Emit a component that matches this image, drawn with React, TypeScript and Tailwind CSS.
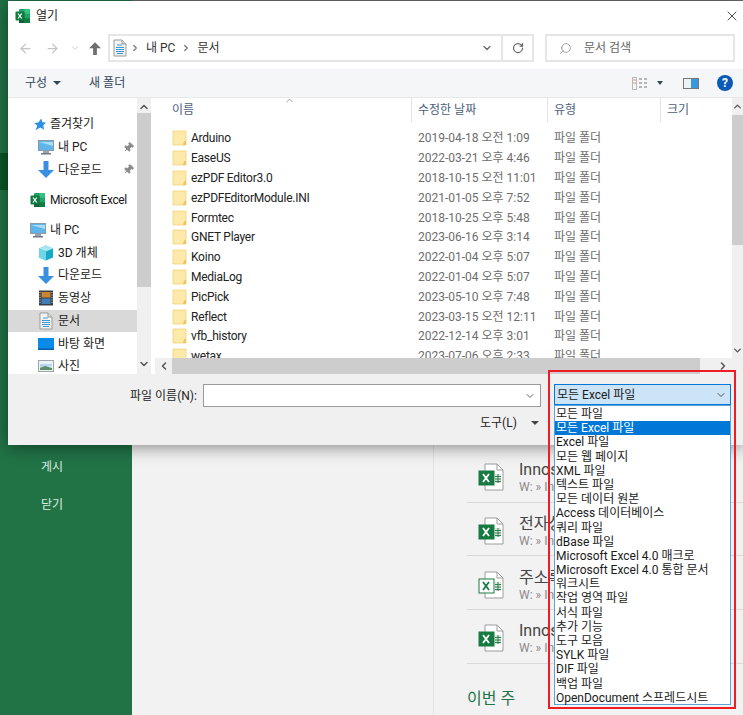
import { ArrowLeft, ArrowRight, ChevronDown, ChevronLeft, ChevronRight, ChevronUp, Pin, RotateCw, Search, X } from "lucide-react"

const font = "font-['Roboto','Noto_Sans_CJK_KR',sans-serif]"

const folders = [
  ["Arduino", "2019-04-18 오전 1:09"],
  ["EaseUS", "2022-03-21 오후 4:46"],
  ["ezPDF Editor3.0", "2018-10-15 오전 11:01"],
  ["ezPDFEditorModule.INI", "2021-01-05 오후 7:52"],
  ["Formtec", "2018-10-25 오후 5:48"],
  ["GNET Player", "2023-06-16 오후 3:14"],
  ["Koino", "2022-01-04 오후 5:07"],
  ["MediaLog", "2022-01-04 오후 5:07"],
  ["PicPick", "2023-05-10 오후 7:48"],
  ["Reflect", "2023-03-15 오전 12:11"],
  ["vfb_history", "2022-12-14 오후 3:01"],
  ["wetax", "2023-07-06 오후 2:33"],
]

const filters = [
  "모든 파일",
  "모든 Excel 파일",
  "Excel 파일",
  "모든 웹 페이지",
  "XML 파일",
  "텍스트 파일",
  "모든 데이터 원본",
  "Access 데이터베이스",
  "쿼리 파일",
  "dBase 파일",
  "Microsoft Excel 4.0 매크로",
  "Microsoft Excel 4.0 통합 문서",
  "워크시트",
  "작업 영역 파일",
  "서식 파일",
  "추가 기능",
  "도구 모음",
  "SYLK 파일",
  "DIF 파일",
  "백업 파일",
  "OpenDocument 스프레드시트",
]

const recent = [
  { title: "Innos", path: "W: » In", old: false },
  { title: "전자상", path: "W: » In", old: false },
  { title: "주소록", path: "W: » In", old: true },
  { title: "Innos", path: "W: » In", old: false },
]

function ExcelLogo({ size = 16 }: { size?: number }) {
  return (
    <svg width={size} height={size} viewBox="0 0 16 16" className="shrink-0">
      <rect x="4" y="1" width="11" height="14" rx="1" fill="#21a366" />
      <rect x="9.5" y="1" width="5.5" height="4.7" fill="#33c481" />
      <rect x="4" y="5.7" width="5.5" height="4.6" fill="#107c41" />
      <rect x="9.5" y="10.3" width="5.5" height="4.7" fill="#107c41" />
      <rect x="4" y="10.3" width="5.5" height="4.7" fill="#185c37" />
      <rect x="0.5" y="3.5" width="9" height="9" rx="1" fill="#0f7a3f" />
      <path d="M3 5.5l3.8 5M6.8 5.5L3 10.5" stroke="#fff" strokeWidth="1.2" />
    </svg>
  )
}

function FolderIcon() {
  return (
    <svg width="16" height="16" viewBox="0 0 16 16" className="shrink-0">
      <path d="M1 1h13v14H1z" fill="#fde9a9" stroke="#f3d27a" strokeWidth="0.8" />
      <path d="M12 11.5l2-1V15h-3z" fill="#eec560" />
    </svg>
  )
}

function DocIcon() {
  return (
    <svg width="16" height="18" viewBox="0 0 16 18" className="shrink-0">
      <path d="M2 1h8l4 4v12H2z" fill="#f4f4f4" stroke="#9a9a9a" />
      <path d="M10 1v4h4" fill="#dcdcdc" stroke="#9a9a9a" />
      <path d="M5 6h5M4 8.5h8M4 10.5h8M4 12.5h8M5 14.5h6" stroke="#3d9ad9" strokeWidth="1.2" />
    </svg>
  )
}

function PcIcon() {
  return (
    <svg width="16" height="15" viewBox="0 0 16 15" className="shrink-0">
      <rect x="0.5" y="0.5" width="15" height="10" fill="#5fb4ea" stroke="#8a9aa6" />
      <path d="M1 2l14 0v4z" fill="#a8dcf8" />
      <rect x="5" y="11" width="6" height="2" fill="#9aa5ad" />
      <rect x="3" y="13" width="10" height="1.5" fill="#6f7b84" />
    </svg>
  )
}

function BlockArrow({ up, color, w = 16, h = 17 }: { up?: boolean; color: string; w?: number; h?: number }) {
  return (
    <svg width={w} height={h} viewBox="0 0 16 17" className={`shrink-0 ${up ? "rotate-180" : ""}`}>
      <path d="M5.5 0h5v9H16l-8 8-8-8h5.5z" fill={color} />
    </svg>
  )
}

function SideIcon({ kind }: { kind: string }) {
  if (kind === "star")
    return (
      <svg width="13" height="13" viewBox="0 0 24 24" className="shrink-0">
        <path d="M15 1l2.5 7 6.5.5-5 5 1.5 8-7-4-9 5 3.5-8L2 9l8-.5z" fill="#2f8fe0" />
      </svg>
    )
  if (kind === "pc") return <PcIcon />
  if (kind === "down") return <BlockArrow color="#3a8fe0" />
  if (kind === "excel") return <ExcelLogo />
  if (kind === "cube")
    return (
      <svg width="16" height="16" viewBox="0 0 16 16" className="shrink-0">
        <path d="M8 0.5l7 3v9l-7 3-7-3v-9z" fill="#17a9c9" />
        <path d="M8 0.5l7 3-7 3-7-3z" fill="#a9e8f2" />
        <path d="M1 3.5l7 3v9l-7-3z" fill="#6fd6e6" />
      </svg>
    )
  if (kind === "film")
    return (
      <svg width="16" height="16" viewBox="0 0 16 16" className="shrink-0">
        <rect x="1" y="0.5" width="14" height="15" fill="#3a3f46" />
        <rect x="3.5" y="2" width="9" height="5.5" fill="#c9862f" />
        <rect x="3.5" y="8.5" width="9" height="5.5" fill="#3f7fb8" />
        <path d="M2 2v12M14 2v12" stroke="#d9d9d9" strokeDasharray="1 1.5" />
      </svg>
    )
  if (kind === "doc") return <DocIcon />
  if (kind === "desktop")
    return (
      <svg width="16" height="12" viewBox="0 0 16 12" className="shrink-0">
        <rect width="16" height="12" fill="#0a8be8" />
        <rect y="10.5" width="16" height="1.5" fill="#0a5fa8" />
      </svg>
    )
  return (
    <svg width="16" height="12" viewBox="0 0 16 12" className="shrink-0">
      <rect x="0.5" y="0.5" width="15" height="11" fill="#e8f2f8" stroke="#a3a3a3" />
      <path d="M2 4h12v2l-6 1-6 2z" fill="#b7d7ea" />
      <path d="M2 10V8l5-2 7 2v2z" fill="#5d8d68" />
    </svg>
  )
}

function SideRow({ kind, label, className, pinned, active }: { kind: string; label: string; className: string; pinned?: boolean; active?: boolean }) {
  return (
    <div className={`flex h-[22.7px] shrink-0 items-center gap-[4px] ${className} ${active ? "bg-[#d9d9d9]" : ""}`}>
      <SideIcon kind={kind} />
      <span className="whitespace-nowrap">{label}</span>
      {pinned && <Pin size={11} fill="#8a8a8a" className="ml-auto mr-[3px] rotate-45 text-[#8a8a8a]" />}
    </div>
  )
}

function FileXlsIcon({ old }: { old: boolean }) {
  return (
    <svg width="26" height="28" viewBox="0 0 26 28" className="shrink-0">
      <path d="M7 1h12l6 6v20H7z" fill="#fff" stroke="#9c9c9c" />
      <path d="M19 1v6h6" fill="none" stroke="#9c9c9c" />
      <path d="M17 11h6v9h-6z" fill="#d8e8dd" />
      <path d="M17 13.5h6M17 16h6M17 18.5h6M20 11v9" stroke="#217346" strokeWidth="0.9" />
      <rect x="1" y="8" width="15" height="14" fill={old ? "#fff" : "#187a43"} stroke="#187a43" />
      <path d="M5 11l6 8M11 11l-6 8" stroke={old ? "#187a43" : "#fff"} strokeWidth="1.8" />
    </svg>
  )
}

export default function App() {
  return (
    <div className={`relative flex h-[715px] w-[743px] overflow-hidden bg-[#f2f2f2] ${font}`}>
      {/* Excel backstage behind the dialog */}
      <div className="flex h-full w-[132px] shrink-0 flex-col bg-[#217346] pl-[41px] pt-[457px] text-[12px] text-[#dcebe2]">
        <div className="h-[38px] leading-[20px]">게시</div>
        <div className="leading-[20px]">닫기</div>
      </div>
      <div className="h-full w-[302px] shrink-0 border-r border-[#e2e2e2]" />
      <div className="flex-1 pl-[33px] pt-[449px]">
        {recent.map((r, i) => (
          <div key={i} className="flex h-[53.7px] items-center gap-[15px] border-b border-[#d9d9d9] pl-[11px] pt-[4px]">
            <FileXlsIcon old={r.old} />
            <div className="flex flex-col">
              <span className="whitespace-nowrap text-[16px] leading-[20px] text-[#444]">{r.title}</span>
              <span className="whitespace-nowrap text-[12px] leading-[14px] text-[#8a8a8a]">{r.path}</span>
            </div>
          </div>
        ))}
        <div className="pt-[25px] text-[16px] leading-[20px] text-[#217346]">이번 주</div>
      </div>

      {/* dark selected nav behind dialog */}
      <div className="absolute left-0 top-[153px] h-[37px] w-[8px] bg-[#0a5526]" />
      <div className="absolute left-[132px] right-0 top-0 h-px bg-[#6e6e6e]" />

      {/* Open dialog */}
      <div className="absolute left-[8px] top-[1px] flex h-[444px] w-[735px] flex-col bg-white text-[12px] text-[#1a1a1a] shadow-[0_2px_16px_rgba(0,0,0,0.45)]">
        <div className="flex h-[29px] shrink-0 items-center pl-[7px] pr-[2px]">
          <ExcelLogo />
          <span className="ml-[5px]">열기</span>
          <X size={16} strokeWidth={1.2} className="ml-auto mr-[1px]" />
        </div>

        <div className="flex h-[39px] shrink-0 items-start pt-[4px]">
          <div className="flex h-[28px] w-[100px] items-center text-[#c4c4c4]">
            <ArrowLeft size={15} className="ml-[10px]" />
            <ArrowRight size={15} className="ml-[12px]" />
            <ChevronDown size={10} className="ml-[10px]" />
            <div className="ml-[9px] flex"><BlockArrow up color="#6f6f6f" w={12} h={13} /></div>
          </div>
          <div className="flex h-[28px] w-[426px] items-center border-2 border-[#e6e6e6] text-[#333]">
            <div className="ml-[2px]"><DocIcon /></div>
            <ChevronRight size={10} strokeWidth={3} className="ml-[2px] text-[#777]" />
            <span className="ml-[6px]">내 PC</span>
            <ChevronRight size={10} strokeWidth={3} className="ml-[6px] text-[#777]" />
            <span className="ml-[6px]">문서</span>
            <ChevronDown size={12} strokeWidth={2.5} className="ml-auto mr-[8px] text-[#666]" />
            <div className="flex h-full w-[31px] items-center justify-center border-l-2 border-[#e6e6e6]">
              <RotateCw size={12} strokeWidth={2.5} className="text-[#666]" />
            </div>
          </div>
          <div className="ml-[11px] flex h-[28px] w-[190px] items-center border-2 border-[#e6e6e6] text-[#666]">
            <Search size={13} strokeWidth={1.2} className="ml-[12px] -scale-x-100 text-[#777]" />
            <span className="ml-[12px]">문서 검색</span>
          </div>
        </div>

        <div className="flex h-[29px] shrink-0 items-center border-b border-[#e8e8e8] bg-[#f5f6f7] text-[#33475b]">
          <span className="ml-[17px]">구성</span>
          <span className="ml-[6px] h-0 w-0 border-x-[4px] border-t-[4px] border-x-transparent border-t-[#33475b]" />
          <span className="ml-[28px]">새 폴더</span>
          <div className="ml-auto flex items-center">
            <svg width="16" height="13" viewBox="0 0 16 13">
              <rect x="0.5" y="0.5" width="4" height="12" fill="none" stroke="#b9b9b9" />
              <path d="M1 3h3M1 6h3" stroke="#d9534f" strokeWidth="0.6" />
              <path d="M7 2h3M12 2h3M7 6h3M12 6h3M7 10h3M12 10h3" stroke="#777" />
            </svg>
            <span className="ml-[9px] h-0 w-0 border-x-[3.5px] border-t-[4px] border-x-transparent border-t-[#33475b]" />
            <div className="ml-[20px] flex h-[11px] w-[16px] border border-[#777]">
              <div className="flex-1 bg-[#eef3f7]" />
              <div className="w-[7px] bg-[#3a96dd]" />
            </div>
            <div className="ml-[18px] mr-[10px] flex h-[16px] w-[16px] items-center justify-center rounded-full bg-[#0a5bb5] text-[12px] font-bold text-white">?</div>
          </div>
        </div>

        <div className="flex min-h-0 flex-1">
          {/* nav pane */}
          <div className="flex w-[143px] shrink-0 overflow-hidden">
            <div className="flex w-[129px] shrink-0 flex-col overflow-hidden pt-[15px]">
              <SideRow kind="star" label="즐겨찾기" className="pl-[25px]" />
              <SideRow kind="pc" label="내 PC" className="pl-[30px]" pinned />
              <SideRow kind="down" label="다운로드" className="pl-[30px]" pinned />
              <div className="h-[7.5px] shrink-0" />
              <SideRow kind="excel" label="Microsoft Excel" className="pl-[22px] tracking-[-0.4px]" />
              <div className="h-[7.5px] shrink-0" />
              <SideRow kind="pc" label="내 PC" className="pl-[22px]" />
              <SideRow kind="cube" label="3D 개체" className="pl-[30px]" />
              <SideRow kind="down" label="다운로드" className="pl-[30px]" />
              <SideRow kind="film" label="동영상" className="pl-[30px]" />
              <SideRow kind="doc" label="문서" className="pl-[30px]" active />
              <SideRow kind="desktop" label="바탕 화면" className="pl-[30px]" />
              <SideRow kind="photo" label="사진" className="pl-[30px]" />
            </div>
            <div className="flex w-[14px] shrink-0 flex-col bg-[#f0f0f0] text-[#555]">
              <ChevronUp size={12} strokeWidth={3} className="mx-auto mt-[3px] shrink-0" />
              <div className="h-[174px] shrink-0 bg-[#cdcdcd]" />
              <ChevronDown size={12} strokeWidth={3} className="mx-auto mb-[4px] mt-auto shrink-0" />
            </div>
          </div>

          {/* file list */}
          <div className="flex min-w-0 flex-1 flex-col pl-[4px]">
            <div className="relative flex min-h-0 flex-1">
              <div className="flex min-w-0 flex-1 flex-col overflow-hidden">
                <div className="flex h-[24px] shrink-0 text-[#4c607a]">
                  <div className="w-[257px] border-r border-[#e5e5e5] pl-[17px] leading-[25px]">이름</div>
                  <div className="w-[136px] border-r border-[#e5e5e5] pl-[6px] leading-[25px]">수정한 날짜</div>
                  <div className="w-[113px] border-r border-[#e5e5e5] pl-[6px] leading-[25px]">유형</div>
                  <div className="pl-[6px] leading-[25px]">크기</div>
                </div>
                <div className="flex flex-col pt-[6.5px]">
                  {folders.map(([name, date]) => (
                    <div key={name} className="flex h-[19.8px] shrink-0 items-center">
                      <div className="flex w-[257px] items-center gap-[3px] pl-[17px] text-[#222]">
                        <FolderIcon />
                        <span className="whitespace-nowrap tracking-[-0.25px]">{name}</span>
                      </div>
                      <div className="w-[136px] whitespace-nowrap pl-[6px] text-[#6d6d6d]">{date}</div>
                      <div className="pl-[6px] text-[#6d6d6d]">파일 폴더</div>
                    </div>
                  ))}
                </div>
              </div>
              <div className="flex w-[11px] shrink-0 flex-col bg-[#f0f0f0] text-[#555]">
                <ChevronUp size={11} strokeWidth={3} className="my-[3px] shrink-0" />
                <div className="h-[130px] shrink-0 bg-[#cdcdcd]" />
                <ChevronDown size={11} strokeWidth={3} className="mb-[2px] mt-auto shrink-0" />
              </div>
              <ChevronUp size={11} strokeWidth={1.5} className="absolute left-[129px] top-[-3px] text-[#777]" />
            </div>
            <div className="flex h-[16px] shrink-0 items-center bg-[#f0f0f0] text-[#555]">
              <ChevronLeft size={12} strokeWidth={3} className="ml-[3px] shrink-0" />
              <div className="ml-[2px] h-full w-[528px] shrink-0 bg-[#cdcdcd]" />
              <ChevronRight size={12} strokeWidth={3} className="ml-[17px] shrink-0" />
            </div>
          </div>
        </div>

        {/* bottom pane */}
        <div className="h-[71px] shrink-0 bg-[#f0f0f0] pt-[10px]">
          <div className="flex items-center">
            <span className="ml-[122px] w-[73px] whitespace-nowrap text-[#222]">파일 이름(N):</span>
            <div className="flex h-[23px] w-[338px] items-center justify-end border border-[#9a9a9a] bg-white pr-[4px]">
              <ChevronDown size={12} className="text-[#666]" />
            </div>
            <div className="ml-[13px] flex h-[21px] w-[177px] items-center justify-between self-start border border-[#0078d7] bg-[#cce4f7] pl-[2px] pr-[3px]">
              <span>모든 Excel 파일</span>
              <ChevronDown size={12} className="text-[#555]" />
            </div>
          </div>
          <div className="mt-[8px] flex items-center pl-[472px] leading-[16px] text-[#222]">
            <span>도구(L)</span>
            <span className="ml-[14px] h-0 w-0 border-x-[4px] border-t-[4px] border-x-transparent border-t-[#444]" />
          </div>
        </div>
      </div>

      {/* open filter list */}
      <div className="absolute left-[554px] top-[405px] flex h-[300px] w-[177px] flex-col border border-[#5ba3d9] bg-white pt-[1px] text-[12px] leading-[14.2px] text-[#1a1a1a]">
        {filters.map((f) => (
          <div key={f} className={`h-[14.2px] shrink-0 whitespace-nowrap pl-[1px] ${f === "모든 Excel 파일" ? "bg-[#0078d7] text-white" : ""}`}>
            {f}
          </div>
        ))}
      </div>

      {/* red annotation box */}
      <div className="pointer-events-none absolute left-[548px] top-[370px] h-[339px] w-[188px] border-2 border-[#ee1c25]" />
    </div>
  )
}
